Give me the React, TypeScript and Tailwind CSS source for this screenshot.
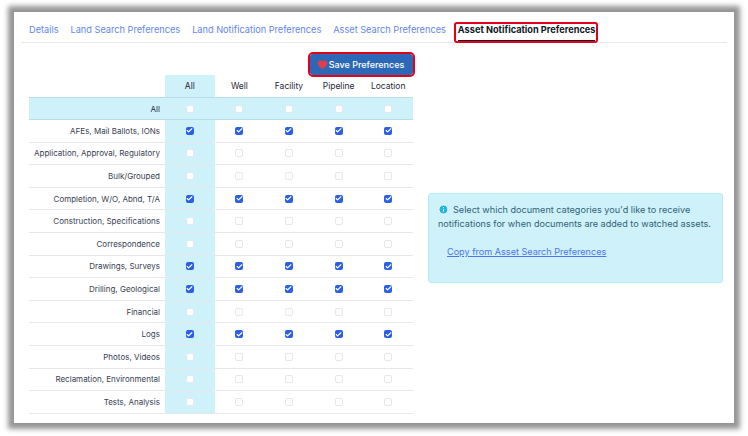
import { Heart, Info, Check } from "lucide-react";

const columns = ["All", "Well", "Facility", "Pipeline", "Location"];

const categories = [
  { name: "AFEs, Mail Ballots, IONs", on: true },
  { name: "Application, Approval, Regulatory", on: false },
  { name: "Bulk/Grouped", on: false },
  { name: "Completion, W/O, Abnd, T/A", on: true },
  { name: "Construction, Specifications", on: false },
  { name: "Correspondence", on: false },
  { name: "Drawings, Surveys", on: true },
  { name: "Drilling, Geological", on: true },
  { name: "Financial", on: false },
  { name: "Logs", on: true },
  { name: "Photos, Videos", on: false },
  { name: "Reclamation, Environmental", on: false },
  { name: "Tests, Analysis", on: false },
];

const tabs = [
  "Details",
  "Land Search Preferences",
  "Land Notification Preferences",
  "Asset Search Preferences",
];

function Box({ checked, faint }: { checked: boolean; faint?: boolean }) {
  if (checked) {
    return (
      <span className="flex h-[8px] w-[8px] items-center justify-center rounded-[2px] bg-[#2b5fe8]">
        <Check className="h-[7px] w-[7px] text-white" strokeWidth={4} />
      </span>
    );
  }
  return (
    <span
      className={`h-[8px] w-[8px] rounded-[2px] border bg-white ${
        faint ? "border-[#e5e7eb]" : "border-[#e3e8ec]"
      }`}
    />
  );
}

function Row({ name, on }: { name: string; on: boolean }) {
  return (
    <div className="flex h-[22.6px] border-b border-[#e5e7eb]">
      <div className="flex w-[136px] items-center justify-end whitespace-nowrap pr-[5px] text-[8px] text-[#374151]">
        {name}
      </div>
      {columns.map((c, i) => (
        <div
          key={c}
          className={`flex w-[49.6px] items-center justify-center ${i === 0 ? "bg-[#cff1fa]" : ""}`}
        >
          <Box checked={on} faint={i > 0} />
        </div>
      ))}
    </div>
  );
}

export default function App() {
  return (
    <div className="h-[436px] w-[748px] bg-white pl-[14px] pt-[12px] font-['Inter',sans-serif]">
      <div className="h-[411px] w-[720px] bg-white shadow-[0_0_5px_6px_#969696]">
        {/* tabs */}
        <div className="ml-[7px] flex h-[31px] w-[706px] gap-[12px] border-b border-[#e5e7eb] pl-[8px] text-[9.2px]">
          {tabs.map((t) => (
            <div key={t} className="whitespace-nowrap pt-[11px] leading-[13px] text-[#6486ee]">
              {t}
            </div>
          ))}
          <div className="relative h-[30px] whitespace-nowrap border-b-2 border-[#111827] pt-[11px] leading-[13px] font-bold text-[#111827]">
            Asset Notification Preferences
            <span className="absolute -bottom-[3px] -left-[4px] -right-[3px] top-[10px] rounded-[3px] border-2 border-[#e3001b]" />
          </div>
        </div>

        <div className="flex pl-[15px]">
          <div className="w-[384px] text-[8.5px]">
            <div className="flex h-[32px] items-end justify-end">
              <button className="flex h-[21px] w-[103px] items-center justify-center gap-[1px] rounded-[3px] bg-[#2b68b8] pr-[2px] text-[9px] font-medium text-white outline-2 outline-[#e3001b]">
                <Heart className="h-[11px] w-[11px] fill-[#e23d4b] text-[#e23d4b]" />
                Save Preferences
              </button>
            </div>
            <div className="flex h-[22px]">
              <div className="w-[136px]" />
              {columns.map((c, i) => (
                <div
                  key={c}
                  className={`flex w-[49.6px] items-center justify-center text-[#1f2937] ${
                    i === 0 ? "bg-[#cff1fa]" : ""
                  }`}
                >
                  {c}
                </div>
              ))}
            </div>
            <div className="flex h-[23px] border-y border-[#b7dde6] bg-[#cff1fa]">
              <div className="flex w-[136px] items-center justify-end pr-[5px] text-[8px] text-[#1f2937]">All</div>
              {columns.map((c) => (
                <div key={c} className="flex w-[49.6px] items-center justify-center">
                  <Box checked={false} />
                </div>
              ))}
            </div>
            {categories.map((cat) => (
              <Row key={cat.name} name={cat.name} on={cat.on} />
            ))}
          </div>

          <div className="ml-[15px] mt-[150px] h-[90px] w-[295px] rounded-[3px] border border-[#b6ecf8] bg-[#cff1fa] pl-[9px] pr-[6px] pt-[9px] text-[9.1px] leading-[14px] text-[#2f6474]">
            <div>
              <Info className="mr-[4px] inline h-[11px] w-[11px] fill-[#22b8e0] align-[-2px] text-white" />
              Select which document categories you'd like to receive notifications for when documents are added to watched assets.
            </div>
            <div className="mt-[14px] pl-[9px] text-[#4f74e8] underline">Copy from Asset Search Preferences</div>
          </div>
        </div>
      </div>
    </div>
  );
}
